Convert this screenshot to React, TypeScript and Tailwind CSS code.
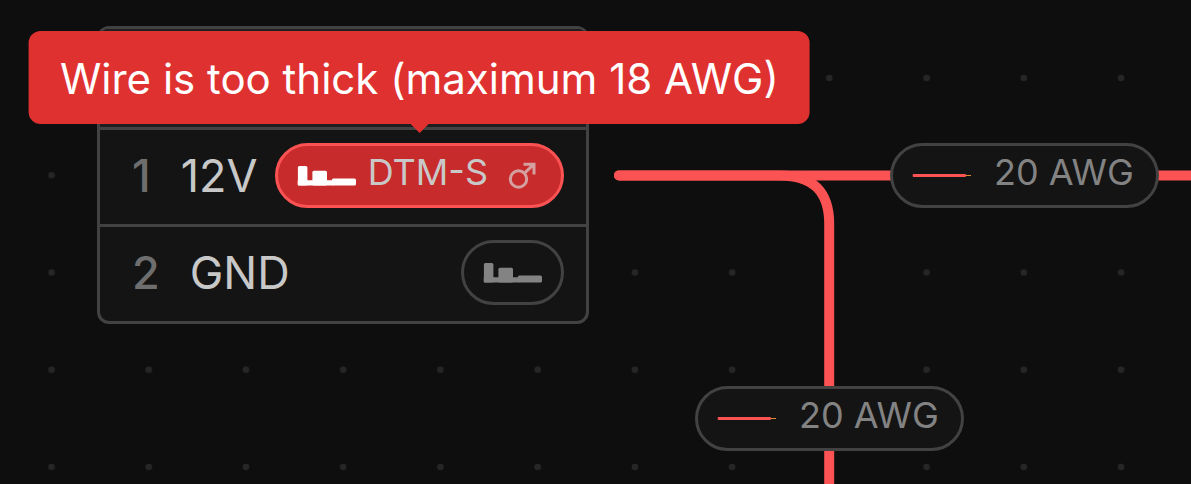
import type { ReactNode } from "react";

type Tone = "neutral" | "error";

function TerminalIcon({ className }: { className: string }) {
  return (
    <svg viewBox="0 0 59 20" className={`h-5 w-[59px] shrink-0 ${className}`} fill="currentColor" aria-hidden="true">
      <rect x="0.9" y="0" width="9.5" height="19.5" rx="1.5" />
      <rect x="15.4" y="4.7" width="14.6" height="14.8" rx="1.5" />
      <rect x="0.7" y="14.3" width="36" height="5.3" rx="0.8" />
      <rect x="34.8" y="12.6" width="24.2" height="7" rx="1.5" />
    </svg>
  );
}

function MaleIcon() {
  return (
    <svg viewBox="0 0 28 28" className="size-7 shrink-0 text-[#d4a0a0]" fill="none" stroke="currentColor" strokeWidth="3" aria-hidden="true">
      <circle cx="10.5" cy="17" r="8.2" />
      <path d="M16.5 11.2 25.5 2.7M15.5 2.2H26V12.5" />
    </svg>
  );
}

function WireIcon() {
  return (
    <svg viewBox="0 0 59 4" className="h-1 w-[59px] shrink-0" aria-hidden="true">
      <rect x="50" y="1" width="9" height="1" fill="#e08a2e" />
      <rect x="0.7" y="0" width="53.3" height="3" rx="1" fill="#fb5253" />
    </svg>
  );
}

function Pill({ tone = "neutral", label, children }: { tone?: Tone; label?: string; children: ReactNode }) {
  const colors =
    tone === "error" ? "border-[#fb5253] bg-[#c82b2b] text-[#c8c8c8]" : "border-[#424242] bg-[#141414] text-[#838383]";
  return (
    <button
      type="button"
      aria-label={label}
      className={`flex h-[65px] items-center rounded-full border-3 px-[19px] text-4xl whitespace-nowrap ${colors}`}
    >
      {children}
    </button>
  );
}

function WirePill() {
  return (
    <Pill>
      <WireIcon />
      <span className="pr-[3px] pb-2 pl-[23px]">20 AWG</span>
    </Pill>
  );
}

function Tooltip({ children }: { children: ReactNode }) {
  return (
    <div
      role="tooltip"
      className="absolute bottom-full left-1/2 mb-[19px] -translate-x-1/2 rounded-xl bg-[#e03131] px-[31px] pt-[17px] pb-[15px] text-[42px] leading-[61px] whitespace-nowrap text-white"
    >
      {children}
      <svg viewBox="0 0 18 9" className="absolute top-full left-1/2 h-[9px] w-[18px] -translate-x-1/2" aria-hidden="true">
        <path d="M0 0H18L9 9Z" fill="#e03131" />
      </svg>
    </div>
  );
}

function PinRow({ index, name, children }: { index: number; name: string; children: ReactNode }) {
  return (
    <li className="flex h-[97px] items-center border-t-3 border-[#424242] pr-[22px] pb-[3px] pl-8 text-[45px]">
      <span className="font-medium text-[#6e6e6e]">{index}</span>
      <span className="pl-[30px] text-[#c8c8c8]">{name}</span>
      <div className="relative ml-auto">{children}</div>
    </li>
  );
}

function ConnectorCard() {
  return (
    <section aria-label="Connector" className="w-[492px] rounded-xl border-3 border-[#424242] bg-[#141414]">
      <header className="h-[98px] rounded-t-lg bg-[#1f1f1f]" />
      <ul>
        <PinRow index={1} name="12V">
          <Pill tone="error">
            <TerminalIcon className="text-white" />
            <span className="pr-5 pb-2 pl-3">DTM-S</span>
            <span className="pr-[6px]">
              <MaleIcon />
            </span>
          </Pill>
          <Tooltip>Wire is too thick (maximum 18 AWG)</Tooltip>
        </PinRow>
        <PinRow index={2} name="GND">
          <Pill label="GND terminal">
            <TerminalIcon className="text-[#838383]" />
          </Pill>
        </PinRow>
      </ul>
    </section>
  );
}

export default function App() {
  return (
    <main className="relative min-h-screen overflow-hidden bg-[#0e0e0e] font-['Inter',sans-serif]">
      <svg className="absolute inset-0 h-full w-full" aria-hidden="true">
        <defs>
          <pattern id="grid" x="2.9" y="29.4" width="97.23" height="97.23" patternUnits="userSpaceOnUse">
            <circle cx="48.6" cy="48.6" r="3.3" fill="#262626" />
          </pattern>
        </defs>
        <rect width="100%" height="100%" fill="url(#grid)" />
        <g fill="none" stroke="#fb5253" strokeWidth="10" strokeLinecap="round">
          <path d="M619 175.4H4000" />
          <path d="M619 175.4H780Q829.2 175.4 829.2 224V4000" />
        </g>
      </svg>
      <div className="absolute top-[143px] left-[890px]">
        <WirePill />
      </div>
      <div className="absolute top-[386px] left-[695px]">
        <WirePill />
      </div>
      <div className="absolute top-[26px] left-[97px]">
        <ConnectorCard />
      </div>
    </main>
  );
}
